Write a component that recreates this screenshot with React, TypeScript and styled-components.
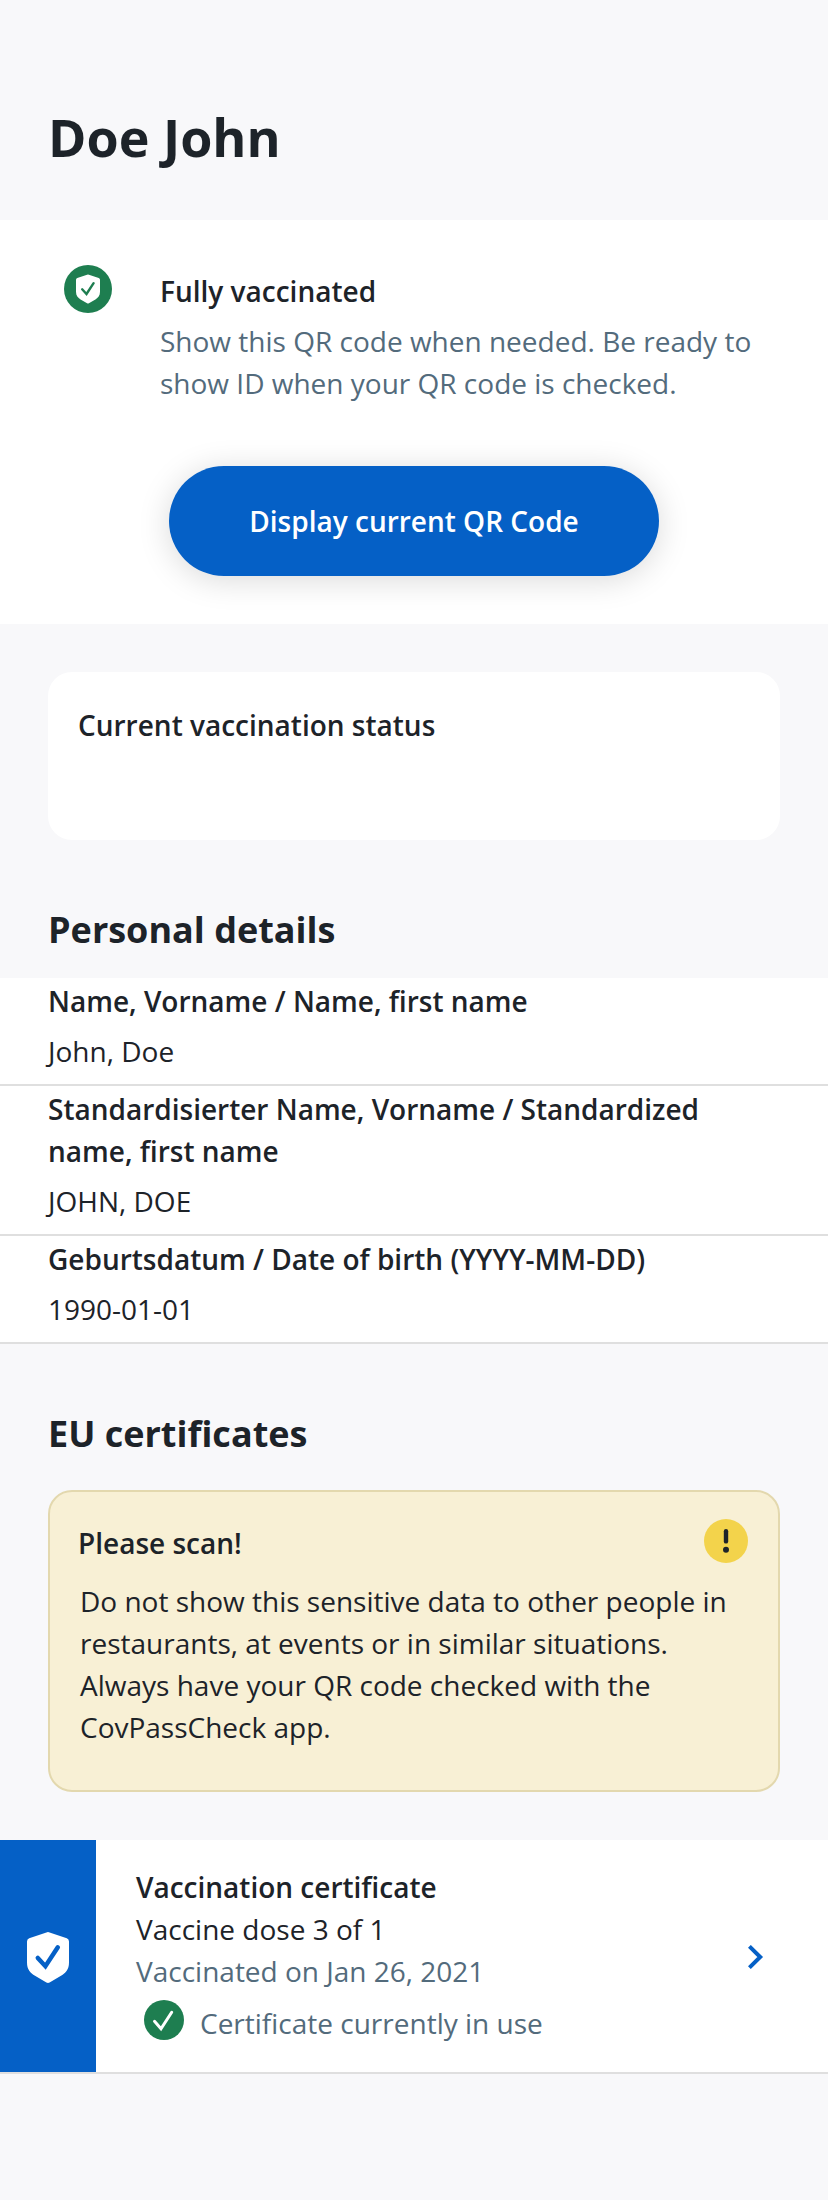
import React from "react";
import styled, { createGlobalStyle } from "styled-components";

const Global = createGlobalStyle`
  *{box-sizing:border-box}
  body{margin:0;background:#f8f8fa;color:#1d2329;font-family:"Open Sans",sans-serif;font-size:28px;line-height:42px}
  h1,h2,h3,p{margin:0}
`;
const Page = styled.main`width:828px;height:2200px;overflow:hidden;`;
const Title = styled.h1`font-size:52px;line-height:68px;font-weight:700;padding:103px 48px 49px;height:220px;`;
const Status = styled.section`background:#fff;height:404px;padding:45px 48px 0 64px;display:flex;flex-direction:column;`;
const StatusRow = styled.div`display:flex;gap:48px;`;
const Strong = styled.h3`font-size:28px;line-height:42px;font-weight:600;`;
const Muted = styled.p`color:#536b7c;`;
const StatusText = styled.div`padding-top:5px;${Muted}{margin-top:8px;}`;
const QrButton = styled.button`
  margin:62px 0 0 105px;width:490px;height:110px;border:0;border-radius:55px;background:#0560c6;color:#fff;
  font:600 28px/42px "Open Sans",sans-serif;box-shadow:0 4px 32px rgba(0,0,0,.15);
`;
const StatusCard = styled.section`margin:48px 48px 0;height:168px;border-radius:24px;background:#fff;padding:32px 30px;`;
const Heading = styled.h2<{ $top: number; $bottom: number }>`
  font-size:36px;line-height:48px;font-weight:700;padding:${p => p.$top}px 48px ${p => p.$bottom}px;
`;
const Detail = styled.div`background:#fff;border-bottom:2px solid #dfdfdf;padding:2px 48px 12px;p{margin-top:8px;}`;
const Warning = styled.section`margin:0 48px;height:302px;border:2px solid #e3d8ae;border-radius:24px;background:#f8f0d5;padding:25px 28px;`;
const WarningHead = styled.div`display:flex;justify-content:space-between;height:63px;h3{padding-top:5px;}`;
const WarningText = styled.p`padding-left:2px;`;
const Certificate = styled.section`margin-top:48px;height:234px;background:#fff;border-bottom:2px solid #dfdfdf;display:flex;`;
const Badge = styled.div`width:96px;background:#0560c6;display:flex;align-items:center;justify-content:center;padding-top:3px;`;
const CertText = styled.div`padding:26px 0 0 40px;flex:1;`;
const InUse = styled.div`display:flex;gap:16px;padding:8px 0 0 8px;`;
const InUseLabel = styled(Muted)`padding-top:2px;`;
const Arrow = styled.div`display:flex;align-items:center;padding:2px 64px 0 0;`;

const Shield = ({ width, height, color, stroke }: { width: number; height: number; color: string; stroke: number }) => (
  <svg width={width} height={height} viewBox="0 0 42 51">
    <path d="M19.4.4Q21-.2 22.6.4L39.8 6.3Q42 7.1 42 9.4V30.5C42 37.5 38.6 41 34 43.8L22.6 50.5Q21 51.3 19.4 50.5L8 43.8C3.4 41 0 37.5 0 30.5V9.4Q0 7.1 2.2 6.3Z" fill="#fff" />
    <path d="M10.8 26L18.4 34.2L30.8 15.3" fill="none" stroke={color} strokeWidth={stroke} strokeLinecap="round" />
  </svg>
);
const Disc = styled.div`width:48px;height:48px;border-radius:50%;background:#1e7e50;display:flex;align-items:center;justify-content:center;`;

const details = [
  ["Name, Vorname / Name, first name", "John, Doe"],
  ["Standardisierter Name, Vorname / Standardized name, first name", "JOHN, DOE"],
  ["Geburtsdatum / Date of birth (YYYY-MM-DD)", "1990-01-01"],
];

export default function App() {
  return (
    <Page>
      <Global />
      <Title>Doe John</Title>
      <Status>
        <StatusRow>
          <Disc><Shield width={24} height={30} color="#1e7e50" stroke={4.2} /></Disc>
          <StatusText>
            <Strong>Fully vaccinated</Strong>
            <Muted>Show this QR code when needed. Be ready to<br />show ID when your QR code is checked.</Muted>
          </StatusText>
        </StatusRow>
        <QrButton>Display current QR Code</QrButton>
      </Status>
      <StatusCard><Strong>Current vaccination status</Strong></StatusCard>
      <Heading $top={66} $bottom={24}>Personal details</Heading>
      {details.map(([k, v]) => <Detail key={k}><Strong>{k}</Strong><p>{v}</p></Detail>)}
      <Heading $top={66} $bottom={32}>EU certificates</Heading>
      <Warning>
        <WarningHead>
          <Strong>Please scan!</Strong>
          <svg width="48" height="48" viewBox="0 0 48 48">
            <circle cx="24" cy="24" r="22" fill="#f3d34b" />
            <path d="M24 14.2v10.2" stroke="#1d2329" strokeWidth="4.4" strokeLinecap="round" />
            <circle cx="24" cy="32.7" r="3" fill="#1d2329" />
          </svg>
        </WarningHead>
        <WarningText>Do not show this sensitive data to other people in restaurants, at events or in similar situations. Always have your QR code checked with the CovPassCheck app.</WarningText>
      </Warning>
      <Certificate>
        <Badge><Shield width={42} height={51} color="#0560c6" stroke={4.5} /></Badge>
        <CertText>
          <Strong>Vaccination certificate</Strong>
          <p>Vaccine dose 3 of 1</p>
          <Muted>Vaccinated on Jan 26, 2021</Muted>
          <InUse>
            <svg width="40" height="40" viewBox="0 0 40 40">
              <circle cx="20" cy="20" r="20" fill="#1e7e50" />
              <path d="M10.5 21.3L17 28.7L27.7 12.3" fill="none" stroke="#fff" strokeWidth="3" strokeLinecap="round" />
            </svg>
            <InUseLabel>Certificate currently in use</InUseLabel>
          </InUse>
        </CertText>
        <Arrow>
          <svg width="16" height="24" viewBox="0 0 16 24"><path d="M1.4 1.4L12.2 12L1.4 22.6" fill="none" stroke="#0560c6" strokeWidth="4" /></svg>
        </Arrow>
      </Certificate>
    </Page>
  );
}
